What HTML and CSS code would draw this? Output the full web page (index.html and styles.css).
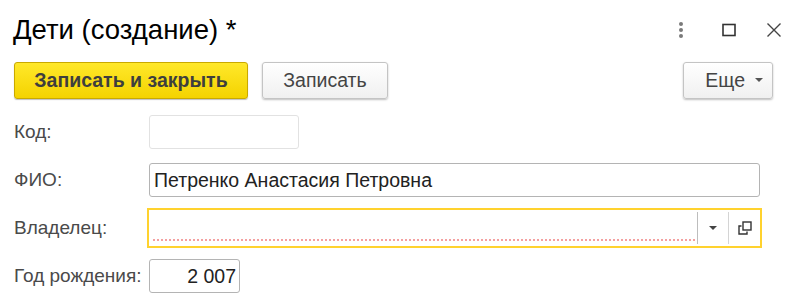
FILE: index.html
```html
<!DOCTYPE html>
<html lang="ru">
<head>
<meta charset="utf-8">
<title>Дети (создание)</title>
<link rel="stylesheet" href="styles.css">
</head>
<body>
<div class="window">
  <header class="header">
    <h1 class="title">Дети (создание) *</h1>
    <div class="win-icons">
      <svg class="ico-dots" width="8" height="18" viewBox="0 0 8 18"><circle cx="4" cy="3" r="2" fill="#7a7a7a"/><circle cx="4" cy="9" r="2" fill="#7a7a7a"/><circle cx="4" cy="15" r="2" fill="#7a7a7a"/></svg>
      <svg class="ico-max" width="14" height="14" viewBox="0 0 14 14"><rect x="1" y="1.5" width="12" height="11" fill="none" stroke="#333" stroke-width="1.6"/></svg>
      <svg class="ico-close" width="16" height="16" viewBox="0 0 16 16"><path d="M1.5 1.5 L14.5 14.5 M14.5 1.5 L1.5 14.5" stroke="#444" stroke-width="1.4" fill="none"/></svg>
    </div>
  </header>
  <div class="toolbar">
    <button class="btn btn-primary">Записать и закрыть</button>
    <button class="btn btn-plain">Записать</button>
    <button class="btn btn-more">Еще <span class="caret"></span></button>
  </div>
  <div class="form">
    <div class="row row-first">
      <label class="lbl">Код:</label>
      <div class="field field-code"></div>
    </div>
    <div class="row">
      <label class="lbl">ФИО:</label>
      <div class="field field-name">Петренко Анастасия Петровна</div>
    </div>
    <div class="row">
      <label class="lbl">Владелец:</label>
      <div class="field field-owner">
        <div class="owner-input"><span class="req-line"></span></div>
        <div class="owner-btn owner-drop"><span class="caret caret-dark"></span></div>
        <div class="owner-btn owner-open">
          <svg width="14" height="14" viewBox="0 0 14 14"><rect x="5" y="1" width="8" height="8" fill="none" stroke="#333" stroke-width="1.4"/><path d="M3.5 5 H1 V13 H9 V10.5" fill="none" stroke="#333" stroke-width="1.4"/></svg>
        </div>
      </div>
    </div>
    <div class="row">
      <label class="lbl">Год рождения:</label>
      <div class="field field-year">2 007</div>
    </div>
  </div>
</div>
</body>
</html>
```
FILE: styles.css
```css
* { box-sizing: border-box; }
html, body { margin: 0; padding: 0; background: #fff; }
body {
  font-family: "Liberation Sans", Arial, sans-serif;
  width: 800px;
  height: 305px;
  overflow: hidden;
}
.window { padding: 0 0 0 14px; }
.header {
  display: flex;
  align-items: center;
  height: 58px;
  padding-top: 2px;
}
.title {
  margin: 0 0 0 -1px;
  font-weight: normal;
  font-size: 27.5px;
  color: #000;
  flex: 1;
}
.win-icons {
  display: flex;
  align-items: center;
  margin-right: 18px;
}
.ico-dots { margin-right: 37px; }
.ico-max { margin-right: 30px; }
.toolbar {
  display: flex;
  align-items: center;
  height: 38px;
  margin-top: 3px;
}
.btn {
  height: 37px;
  font-family: "Liberation Sans", Arial, sans-serif;
  font-size: 19.5px;
  color: #444;
  border-radius: 3px;
  cursor: pointer;
  padding: 0;
}
.btn-primary {
  width: 234px;
  font-weight: bold;
  background: linear-gradient(#ffe82a, #f4d300);
  border: 1px solid #c9a900;
  box-shadow: 0 1px 1px rgba(0,0,0,0.25);
  color: #3e3e3e;
}
.btn-plain {
  width: 126px;
  margin-left: 14px;
  background: linear-gradient(#ffffff, #f0f0f0);
  border: 1px solid #c4c4c4;
  box-shadow: 0 1px 2px rgba(0,0,0,0.25);
}
.btn-more {
  width: 90px;
  margin-left: auto;
  margin-right: 27px;
  background: linear-gradient(#ffffff, #f0f0f0);
  border: 1px solid #c4c4c4;
  box-shadow: 0 1px 2px rgba(0,0,0,0.25);
  display: flex;
  align-items: center;
  justify-content: flex-end;
  padding-right: 9px;
  gap: 10px;
}
.caret {
  display: inline-block;
  width: 0;
  height: 0;
  border-left: 4px solid transparent;
  border-right: 4px solid transparent;
  border-top: 4px solid #555;
}
.caret-dark { border-top-color: #444; }
.form {
  display: flex;
  flex-direction: column;
  gap: 11px;
  margin-top: 16px;
}
.row {
  display: grid;
  grid-template-columns: 135px 1fr;
  align-items: center;
}
.row-first { margin-bottom: 3px; }
.lbl {
  font-size: 19px;
  color: #4a4a4a;
}
.field {
  height: 34px;
  border: 1px solid #b4b4b4;
  border-radius: 3px;
  font-size: 19.5px;
  color: #222;
  display: flex;
  align-items: center;
  padding: 0 6px;
  background: #fff;
}
.field-code {
  width: 150px;
  height: 34px;
  border-color: #e2e2e2;
}
.field-name {
  width: 611px;
  padding-left: 4px;
}
.field-owner {
  width: 615px;
  height: 40px;
  margin-left: -2px;
  border: 2px solid #ffd22e;
  border-radius: 0;
  padding: 0;
  align-items: stretch;
}
.owner-input {
  flex: 1;
  position: relative;
  border-right: 1px solid #bdbdbd;
  margin: 2px 0;
}
.req-line {
  position: absolute;
  left: 4px;
  right: 2px;
  bottom: 3px;
  border-bottom: 2px dotted #f4a0a0;
}
.owner-btn {
  display: flex;
  align-items: center;
  justify-content: center;
}
.owner-drop {
  width: 31px;
  border-right: 1px solid #d4d4d4;
  margin: 2px 0;
}
.owner-open { width: 31px; }
.field-year {
  width: 91px;
  justify-content: flex-end;
  padding-right: 3px;
}
```
